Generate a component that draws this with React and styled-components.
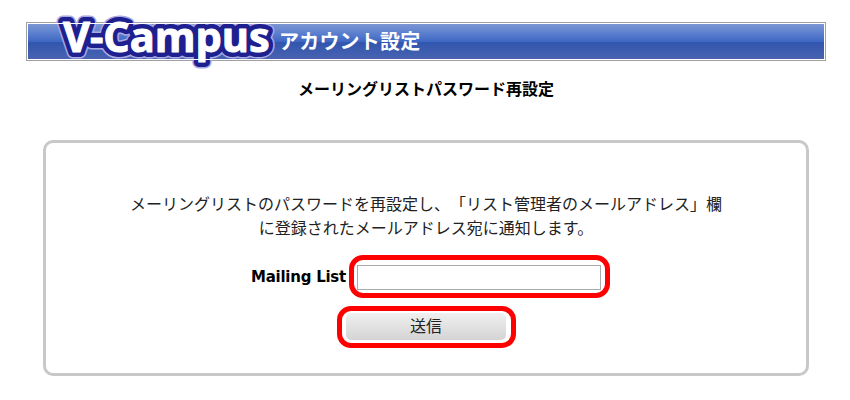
import styled, { createGlobalStyle } from 'styled-components';

const GlobalStyle = createGlobalStyle`
  html, body {
    margin: 0;
    background: #fff;
  }
  body {
    font-family: "DejaVu Sans", "Noto Sans CJK JP", sans-serif;
    color: #000;
    text-spacing-trim: space-all;
  }
`;

const Page = styled.div`
  width: 850px;
  height: 400px;
  padding: 22px 42px 0 26px;
  box-sizing: border-box;
  overflow: hidden;
`;

const Banner = styled.header`
  box-sizing: border-box;
  width: 800px;
  height: 39px;
  border: 1px solid #a0a0a0;
  outline: 1px solid #fff;
  outline-offset: -2px;
  background: linear-gradient(
    to bottom,
    #8098d4 0%,
    #5f82cf 25%,
    #3f68c4 50%,
    #3156ae 52%,
    #4a63b0 100%
  );
  display: flex;
  align-items: center;
  padding-left: 28px;
`;

const LogoMark = styled.svg`
  display: block;
  flex: none;
  width: 224px;
  height: 60px;
  margin: 1px 0 0;
  overflow: visible;
  text {
    font-family: "Open Sans", "DejaVu Sans", sans-serif;
    font-weight: 700;
    font-size: 41.5px;
    stroke-linejoin: round;
    stroke-linecap: round;
  }
`;

const BannerTitle = styled.span`
  font-family: "Noto Sans CJK JP", sans-serif;
  font-weight: 700;
  font-size: 20px;
  letter-spacing: 0.2px;
  line-height: 39px;
  color: #fff;
  margin-top: -3px;
`;

const Heading = styled.h1`
  margin: 15px 0 0;
  width: 800px;
  font-family: "Noto Sans CJK JP", sans-serif;
  font-size: 16px;
  line-height: 24px;
  font-weight: 700;
  text-align: center;
`;

const Panel = styled.main`
  box-sizing: border-box;
  width: 766px;
  height: 236px;
  margin: 40px 0 0 17px;
  border: 3px solid #c8c8c8;
  border-radius: 10px;
  padding-top: 48px;
  display: flex;
  flex-direction: column;
  align-items: center;
`;

const Notice = styled.p`
  margin: 0;
  font-family: "Noto Sans CJK JP", sans-serif;
  font-size: 16px;
  line-height: 24px;
  color: #222;
  text-align: center;
`;

const FormRow = styled.div`
  display: flex;
  align-items: center;
  gap: 11px;
  margin-top: 26px;
`;

const Label = styled.label`
  font-size: 15px;
  letter-spacing: -0.25px;
  font-weight: 700;
  padding-bottom: 2px;
`;

const Marked = styled.span`
  position: relative;
  display: block;
  &::after {
    content: "";
    position: absolute;
    inset: ${(p) => p.$inset};
    border: 5px solid #f00;
    border-radius: 14px;
    pointer-events: none;
  }
`;

const TextInput = styled.input`
  display: block;
  box-sizing: border-box;
  width: 244px;
  height: 25px;
  border: 1px solid #aaa;
  background: #fff;
  padding: 0 4px;
`;

const SendButton = styled.button`
  display: block;
  box-sizing: border-box;
  width: 160px;
  height: 27px;
  border: 0;
  border-radius: 5px;
  background: linear-gradient(to bottom, #f0f0f0, #d4d4d4);
  font-family: "Noto Sans CJK JP", sans-serif;
  font-size: 16px;
  line-height: 25px;
  color: #222;
  padding: 0 0 2px;
`;

const ButtonRow = styled.div`
  margin-top: 23px;
`;

const Logo = () => (
  <LogoMark viewBox="0 0 224 60" role="img" aria-label="V-Campus">
    <text x="8" y="40" fill="#a9a9e4" stroke="#a9a9e4" strokeWidth="13">V-Campus</text>
    <text x="8" y="40" fill="#1f2090" stroke="#1f2090" strokeWidth="10">V-Campus</text>
    <text x="8" y="40" fill="#fff" stroke="#fff" strokeWidth="1">V-Campus</text>
  </LogoMark>
);

export default function App() {
  return (
    <>
      <GlobalStyle />
      <Page>
        <Banner>
          <Logo />
          <BannerTitle>アカウント設定</BannerTitle>
        </Banner>
        <Heading>メーリングリストパスワード再設定</Heading>
        <Panel>
          <Notice>
            メーリングリストのパスワードを再設定し、「リスト管理者のメールアドレス」欄
            <br />
            に登録されたメールアドレス宛に通知します。
          </Notice>
          <FormRow>
            <Label htmlFor="list">Mailing List</Label>
            <Marked $inset="-10px -9px -8px -8px">
              <TextInput id="list" type="text" />
            </Marked>
          </FormRow>
          <ButtonRow>
            <Marked $inset="-7px -10px -8px -9px">
              <SendButton type="button">送信</SendButton>
            </Marked>
          </ButtonRow>
        </Panel>
      </Page>
    </>
  );
}
